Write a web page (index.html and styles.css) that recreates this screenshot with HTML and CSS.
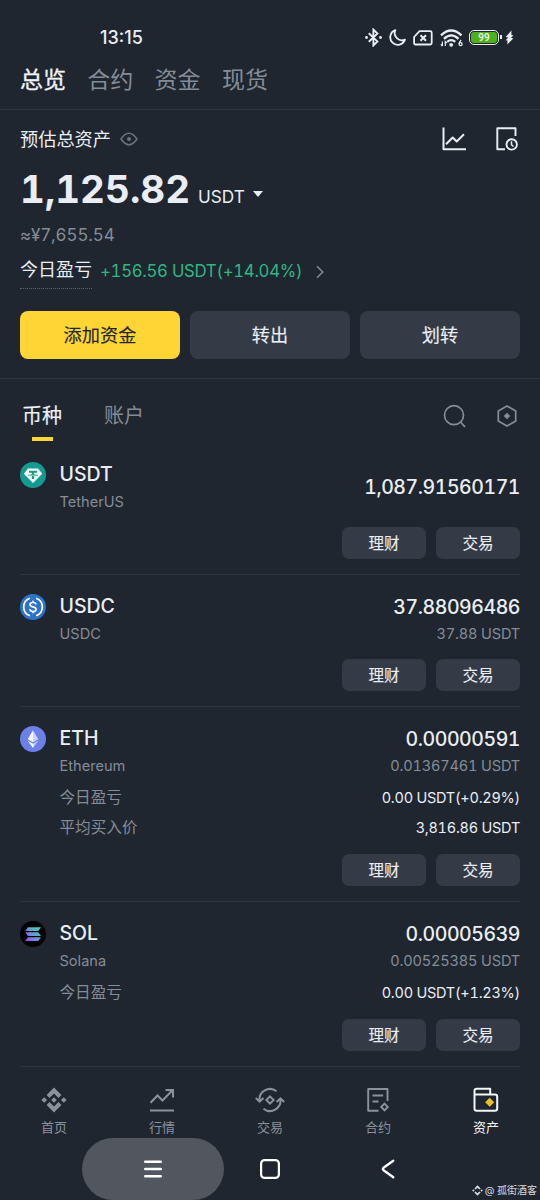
FILE: index.html
```html
<!DOCTYPE html>
<html lang="zh-CN">
<head>
<meta charset="utf-8">
<title>资产总览</title>
<link rel="stylesheet" href="styles.css">
</head>
<body>
<div class="screen">
  <header class="status">
    <span class="clock">13:15</span>
    <div class="status-icons">
      <svg class="bt" width="17" height="19" viewBox="0 0 17 19" fill="none" stroke="currentColor" stroke-width="1.9"><path d="M3.800 5.200l8.600 8.200-4 4V1.600l4 4-8.600 8.200"/><circle cx="1.500" cy="9.500" r="1.400" fill="currentColor" stroke="none"/><circle cx="15.500" cy="9.500" r="1.400" fill="currentColor" stroke="none"/></svg>
      <svg class="moon" width="17" height="17" viewBox="0 0 17 17" fill="none" stroke="currentColor" stroke-width="1.800" stroke-linejoin="round"><path d="M6.300 1.200A7.500 7.500 0 1 0 15.900 10.600 7.200 7.200 0 0 1 6.300 1.200z"/></svg>
      <svg class="sim" width="20" height="16" viewBox="0 0 20 16" fill="none" stroke="currentColor" stroke-width="1.800" stroke-linejoin="round"><path d="M6.500 1.200H17.200q1.500 0 1.500 1.500V13q0 1.500-1.500 1.500H2.600q-1.500 0-1.500-1.500V7z"/><path d="M7.500 5.200l5.500 5.500m0-5.500l-5.500 5.500" stroke-width="2"/></svg>
      <svg class="wifi" width="24" height="18" viewBox="0 0 24 18" fill="none" stroke="currentColor" stroke-width="2.300"><path d="M1 6.300Q11.200-3.400 21.500 6.300M4 9.800q7.200-6.800 14.500 0M7.200 12.900q4-3.600 8 0"/><circle cx="11.200" cy="15.800" r="1.900" fill="currentColor" stroke="none"/><path d="M2.400 12.500v4.500M.8 15.400l1.600 1.700M5.300 17v-4.500l1.600 1.700M21.200 11q-2 2-2 4" stroke-width="1.200"/><circle cx="20.600" cy="15.200" r="1.500" stroke-width="1.300"/></svg>
      <span class="battery"><span class="battery-fill">99</span></span>
      <svg class="bolt" width="9" height="15" viewBox="0 0 9 15" fill="currentColor"><path d="M6.500.5L.6 7l2.700.6L.6 10.200l1.900.3-.2 4L8.300 8.400l-2.300-.7 2.400-2.400-2-.3z"/></svg>
    </div>
  </header>

  <nav class="top-tabs">
    <span class="active">总览</span><span>合约</span><span>资金</span><span>现货</span>
  </nav>

  <section class="summary">
    <div class="summary-head">
      <span class="label">预估总资产</span>
      <svg class="eye" width="18" height="14" viewBox="0 0 18 14" fill="none" stroke="currentColor" stroke-width="1.500" stroke-linejoin="round"><path d="M1 7Q5 1.300 9 1.300T17 7Q13 12.700 9 12.700T1 7z"/><circle cx="9" cy="7" r="2" fill="currentColor" stroke="none"/></svg>
      <div class="head-actions">
        <svg width="24" height="24" viewBox="0 0 24 24" fill="none" stroke="currentColor" stroke-width="2"><path d="M1.500.5v21.700H24M4 17.300l6.700-6.800 4 4 7.300-7.200" stroke-linejoin="round"/></svg>
        <svg width="24" height="24" viewBox="0 0 24 24" fill="none" stroke="currentColor" stroke-width="1.900"><path d="M10 22.200H2.300V1.300H20.500V9" stroke-linejoin="round"/><circle cx="16.700" cy="17.400" r="5.200"/><path d="M16.500 14.300v3.400l2 1.800" stroke-width="1.500"/></svg>
      </div>
    </div>
    <div class="balance"><span class="amount">1,125.82</span><span class="unit">USDT</span><i class="caret"></i></div>
    <div class="fiat">≈¥7,655.54</div>
    <div class="pnl">
      <span class="pnl-label">今日盈亏</span><span class="pnl-value">+156.56 USDT(+14.04%)</span>
      <svg width="8" height="14" viewBox="0 0 8 14" fill="none" stroke="currentColor" stroke-width="1.500"><path d="M1 1.200L6.800 7 1 12.800"/></svg>
    </div>
    <div class="actions">
      <button class="action primary">添加资金</button><button class="action">转出</button><button class="action">划转</button>
    </div>
  </section>

  <div class="list-head">
    <span class="list-tab active">币种</span><span class="list-tab">账户</span>
    <div class="list-tools">
      <svg width="24" height="24" viewBox="0 0 24 24" fill="none" stroke="currentColor" stroke-width="1.700"><circle cx="11" cy="11.200" r="9.500"/><path d="M17.500 18l4.500 4.800"/></svg>
      <svg width="20" height="24" viewBox="0 0 20 24" fill="none" stroke="currentColor" stroke-width="1.700"><path d="M10 2l8.700 5v10L10 22l-8.700-5V7z"/><path d="M10 8.700l3.300 3.300-3.300 3.300L6.700 12z" fill="currentColor" stroke="none"/></svg>
    </div>
  </div>

  <main class="coins">
    <article class="coin">
      <svg class="logo" viewBox="0 0 26 26"><circle cx="13" cy="13" r="13" fill="#129b91"/><path d="M8 6.500h10l4.200 5.300-9.200 9.300-9.200-9.300z" fill="#fff"/><path d="M9 8.800h8v2h-2.900v1.400c2.300.1 4 .5 4 1s-1.700.9-4 1V17h-2.200v-2.800c-2.300-.1-4-.5-4-1s1.700-.9 4-1v-1.400H9z" fill="#129b91"/><path d="M8.800 12.900q4.200 1 8.400 0" fill="none" stroke="#fff" stroke-width=".6"/></svg>
      <div class="info"><div class="row main"><b>USDT</b><strong class="solo">1,087.91560171</strong></div><div class="row sub"><span>TetherUS</span></div>
      <div class="ops"><button>理财</button><button>交易</button></div></div>
    </article>
    <article class="coin">
      <svg class="logo" viewBox="0 0 26 26" fill="none" stroke="#fff"><circle cx="13" cy="13" r="13" fill="#2f73c9" stroke="none"/><path d="M9.900 4.300a9.200 9.200 0 0 0 0 17.400M16.100 4.300a9.200 9.200 0 0 1 0 17.400" stroke-width="1.700"/><path d="M16 10.500c-.2-1.400-1.300-2-3-2-1.800 0-3 .8-3 2.200 0 3.200 6.100 1.200 6.100 4.500 0 1.500-1.300 2.300-3.100 2.300s-3-.8-3.200-2.300M13 6.700v2M13 17.300v2" stroke-width="1.600"/></svg>
      <div class="info"><div class="row main"><b>USDC</b><strong>37.88096486</strong></div><div class="row sub"><span>USDC</span><span>37.88 USDT</span></div>
      <div class="ops"><button>理财</button><button>交易</button></div></div>
    </article>
    <article class="coin">
      <svg class="logo" viewBox="0 0 26 26"><circle cx="13" cy="13" r="13" fill="#6b80e8"/><path d="M13 4.200v12.100l-5.300-3.100z" fill="#f3f5fc"/><path d="M13 4.200v12.100l5.300-3.100z" fill="#cbd2f5"/><path d="M7.700 14.700l5.300 3.100v4.300z" fill="#fff"/><path d="M18.300 14.700L13 17.800v4.300z" fill="#cbd2f5"/></svg>
      <div class="info"><div class="row main"><b>ETH</b><strong>0.00000591</strong></div><div class="row sub"><span>Ethereum</span><span>0.01367461 USDT</span></div>
      <div class="row detail"><span>今日盈亏</span><em>0.00 USDT(+0.29%)</em></div>
      <div class="row detail"><span>平均买入价</span><em>3,816.86 USDT</em></div>
      <div class="ops"><button>理财</button><button>交易</button></div></div>
    </article>
    <article class="coin">
      <svg class="logo" viewBox="0 0 26 26"><defs><linearGradient id="sol" x1="5" y1="20" x2="21" y2="6" gradientUnits="userSpaceOnUse"><stop stop-color="#a341f5"/><stop offset=".5" stop-color="#699ad8"/><stop offset="1" stop-color="#2be6a8"/></linearGradient></defs><circle cx="13" cy="13" r="13" fill="#000"/><path d="M8 6.200h13l-2.800 3.700h-13zM5.200 11.200h13l2.800 3.700H8zM8 16.200h13l-2.800 3.700h-13z" fill="url(#sol)"/></svg>
      <div class="info"><div class="row main"><b>SOL</b><strong>0.00005639</strong></div><div class="row sub"><span>Solana</span><span>0.00525385 USDT</span></div>
      <div class="row detail"><span>今日盈亏</span><em>0.00 USDT(+1.23%)</em></div>
      <div class="ops"><button>理财</button><button>交易</button></div></div>
    </article>
  </main>

  <nav class="bottom-nav">
    <div class="nav-item"><svg viewBox="0 0 26 26" fill="currentColor"><path d="M13 .6l7.400 7.400-2.900 2.900L13 6.400l-4.500 4.500L5.600 8zM13 25.400L5.600 18l2.900-2.900 4.500 4.500 4.500-4.500 2.900 2.900zM13 10.200l2.800 2.800-2.800 2.800-2.800-2.800zM3.200 10.200L6 13l-2.800 2.800L.4 13zM22.800 10.200l2.800 2.800-2.800 2.800L20 13z"/></svg><span>首页</span></div>
    <div class="nav-item"><svg viewBox="0 0 26 26" fill="none" stroke="currentColor" stroke-width="2"><path d="M1.500 15.800l7-7.300 5 5 9.700-10M16.500 3H24v7.500M1 23.500h24"/></svg><span>行情</span></div>
    <div class="nav-item"><svg class="trade" viewBox="0 0 30 26" fill="none" stroke="currentColor" stroke-width="2"><path d="M21.500 4.300A10.500 10.500 0 0 0 4.600 14M.8 11l3.800 3.700L8.400 11M8.500 21.700A10.500 10.500 0 0 0 25.400 12M21.600 15l3.800-3.700 3.800 3.700M15 9.400l3.600 3.600-3.600 3.600-3.600-3.600z"/></svg><span>交易</span></div>
    <div class="nav-item"><svg viewBox="0 0 26 26" fill="none" stroke="currentColor" stroke-width="1.900"><path d="M13.500 23.800H3.200V2h19.300v12M7.500 8.500h10.700M7.500 14.500h6" stroke-linejoin="round"/><path d="M19.500 16.700l3.300 3.300-3.300 3.300-3.300-3.300z"/></svg><span>合约</span></div>
    <div class="nav-item current"><svg viewBox="0 0 26 26" fill="none" stroke="currentColor" stroke-width="2"><path d="M1.500 7.500V4q0-2.300 2.300-2.300h13.400v5.800M1.500 7.500h20.400q2.300 0 2.300 2.300v11.700q0 2.300-2.300 2.300H3.800q-2.300 0-2.300-2.300z" stroke-linejoin="round"/><path d="M16.700 10.700l4.500 4.500-4.500 4.500-4.500-4.500z" fill="#f0c026" stroke="none"/></svg><span>资产</span></div>
  </nav>

  <footer class="system-nav">
    <div class="pill"><svg width="18" height="18" viewBox="0 0 18 18" stroke="currentColor" stroke-width="2.400" stroke-linecap="round"><path d="M1.200 1.700h15.600M1.200 9h15.600M1.200 16.300h15.600"/></svg></div>
    <svg class="home" width="20" height="20" viewBox="0 0 20 20" fill="none" stroke="currentColor" stroke-width="2.200"><rect x="1.100" y="1.100" width="17.800" height="17.800" rx="3.500"/></svg>
    <svg class="back" width="14" height="20" viewBox="0 0 14 20" fill="none" stroke="currentColor" stroke-width="2.300" stroke-linecap="round" stroke-linejoin="round"><path d="M12.300 1.700L2.500 8.800q-1.300 1.200 0 2.400l9.800 7.100"/></svg>
    <div class="credit"><svg width="11" height="11" viewBox="0 0 26 26" fill="currentColor"><path d="M13 .6l7.400 7.400-2.900 2.900L13 6.400l-4.500 4.500L5.600 8zM13 25.400L5.600 18l2.900-2.900 4.500 4.500 4.500-4.500 2.900 2.900zM3.200 10.200L6 13l-2.800 2.800L.4 13zM22.800 10.200l2.800 2.800-2.800 2.800L20 13z"/></svg>@ 孤街酒客</div>
  </footer>
</div>
</body>
</html>
```
FILE: styles.css
```css
* { box-sizing: border-box; }

body {
  margin: 0;
  background: #1f262f;
  color: #eaeef4;
  font-family: Inter, "Noto Sans CJK SC", sans-serif;
  font-variant-numeric: tabular-nums;
}

svg { display: block; flex: none; }

button {
  margin: 0;
  padding: 0;
  border: 0;
  font: inherit;
  color: inherit;
  background: #343b46;
}

.screen {
  width: 540px;
  height: 1200px;
  display: flex;
  flex-direction: column;
  overflow: hidden;
}

.screen > * { flex: none; }

.status {
  height: 56px;
  padding: 19px 26px 0 100px;
  display: flex;
  align-items: center;
  justify-content: space-between;
}

.clock { font-size: 18px; line-height: 36px; font-weight: 500; font-variant-numeric: normal; }
.status-icons { display: flex; align-items: center; }
.moon { margin-left: 7px; }
.sim { margin-left: 7px; }
.wifi { margin-left: 7px; }
.bolt { margin-left: 4px; }

.battery {
  position: relative;
  width: 30px;
  height: 15px;
  margin: 0 2px 0 5px;
  padding: 1px;
  border: 1.5px solid #eaeef4;
  border-radius: 5px;
}

.battery::after {
  content: "";
  position: absolute;
  right: -4px;
  top: 4px;
  width: 2px;
  height: 4px;
  background: #eaeef4;
}

.battery-fill {
  display: block;
  height: 11px;
  border-radius: 3px;
  background: #4eb11c;
  font: 600 10px/11px Roboto, sans-serif;
  text-align: center;
}

.top-tabs {
  height: 54px;
  padding: 7px 20px 0;
  display: flex;
  gap: 21.3px;
  border-bottom: 1px solid #2d343e;
  font-size: 23px;
  line-height: 34px;
  color: #848c98;
}

.top-tabs .active { color: #eef2f7; -webkit-text-stroke: .3px; }

.summary {
  height: 269px;
  padding: 15px 20px 0;
  border-bottom: 1px solid #2d343e;
}

.summary-head { height: 28px; display: flex; align-items: center; }
.label { font-size: 18.2px; line-height: 28px; }
.eye { margin-left: 9px; color: #6d7480; }
.head-actions { margin: 0 1px 0 auto; display: flex; gap: 29px; }

.balance { height: 68px; display: flex; align-items: baseline; }
.amount { font-size: 38.5px; line-height: 72px; font-weight: 700; }
.unit { margin-left: 8px; font-size: 17.2px; }
.caret {
  align-self: center;
  margin: 14px 0 0 8px;
  border: 5px solid transparent;
  border-top: 6px solid #eaeef4;
  border-bottom: 0;
}

.fiat { font-size: 17px; line-height: 28px; letter-spacing: -.1px; color: #848c98; }

.pnl { margin-top: 6px; height: 39px; display: flex; align-items: flex-start; }
.pnl-label { height: 34px; font-size: 18px; line-height: 30px; border-bottom: 1px dotted #59616c; }
.pnl-value { margin-left: 8px; font-size: 16.8px; line-height: 32px; letter-spacing: -.3px; color: #2fb783; }
.pnl svg { margin: 10px 0 0 14px; color: #848c98; }

.actions { margin-top: 17px; display: grid; grid-template-columns: repeat(3, 1fr); gap: 10px; }
.action { height: 48px; padding-bottom: 2px; border-radius: 8px; font-size: 18.2px; -webkit-text-stroke: .15px; }
.action.primary { background: #fed534; color: #1f262f; }

.list-head { height: 64px; padding: 19px 23px 0 22px; display: flex; }
.list-tab { height: 45px; margin-right: 42px; font-size: 20px; line-height: 36px; color: #848c98; }
.list-tab.active { color: #eef2f7; -webkit-text-stroke: .15px; }
.list-tab.active::after { content: ""; display: block; width: 21px; height: 4px; margin: 3px auto 0; background: #fed534; }
.list-tools { margin: 6px 0 0 auto; display: flex; gap: 30px; color: #848c98; }

.coins { padding: 0 20px; }
.coin { display: flex; padding: 17px 0 15px; border-bottom: 1px solid #2d343e; }
.coin .logo { width: 26px; height: 26px; margin: 2px 13.500px 0 0; }
.info { flex: 1; }
.row { display: flex; justify-content: space-between; white-space: nowrap; }
.main { height: 28px; font-size: 19.5px; line-height: 28px; }
.main b, .main strong { font-weight: 500; }
.main strong { padding-top: 1px; letter-spacing: -.45px; }
.main .solo { padding-top: 13px; }
.sub { height: 27px; font-size: 14.6px; line-height: 28px; color: #848c98; }
.sub span + span { letter-spacing: -.2px; }
.detail { height: 30px; margin-top: 3px; font-size: 15.6px; line-height: 31px; color: #848c98; }
.detail + .detail { margin-top: 0; }
.detail em { font-style: normal; color: #eaeef4; font-size: 14.5px; letter-spacing: -.25px; }
.ops { margin-top: 12px; display: flex; justify-content: flex-end; gap: 10px; }
.ops button { width: 84px; height: 32px; padding-bottom: 3px; border-radius: 7px; font-size: 15.5px; -webkit-text-stroke: .15px; }

.bottom-nav { height: 71px; display: grid; grid-template-columns: repeat(5, 1fr); padding-top: 20px; color: #8b929d; }
.nav-item { display: flex; flex-direction: column; align-items: center; font-size: 13px; line-height: 20px; gap: 4px; }
.nav-item svg { width: 26px; height: 26px; }
.nav-item .trade { width: 30px; }
.current { color: #f3f6fa; }

.system-nav { position: relative; height: 62px; display: flex; align-items: center; padding-left: 82px; color: #fff; }
.pill { width: 142px; height: 62px; border-radius: 31px; background: #52565e; display: grid; place-items: center; }
.home { margin-left: 36px; }
.back { margin-left: 101px; }
.credit { position: absolute; right: 3px; bottom: 2px; display: flex; align-items: center; gap: 2px; font-size: 10px; line-height: 16px; color: #d8dbe0; }
```
